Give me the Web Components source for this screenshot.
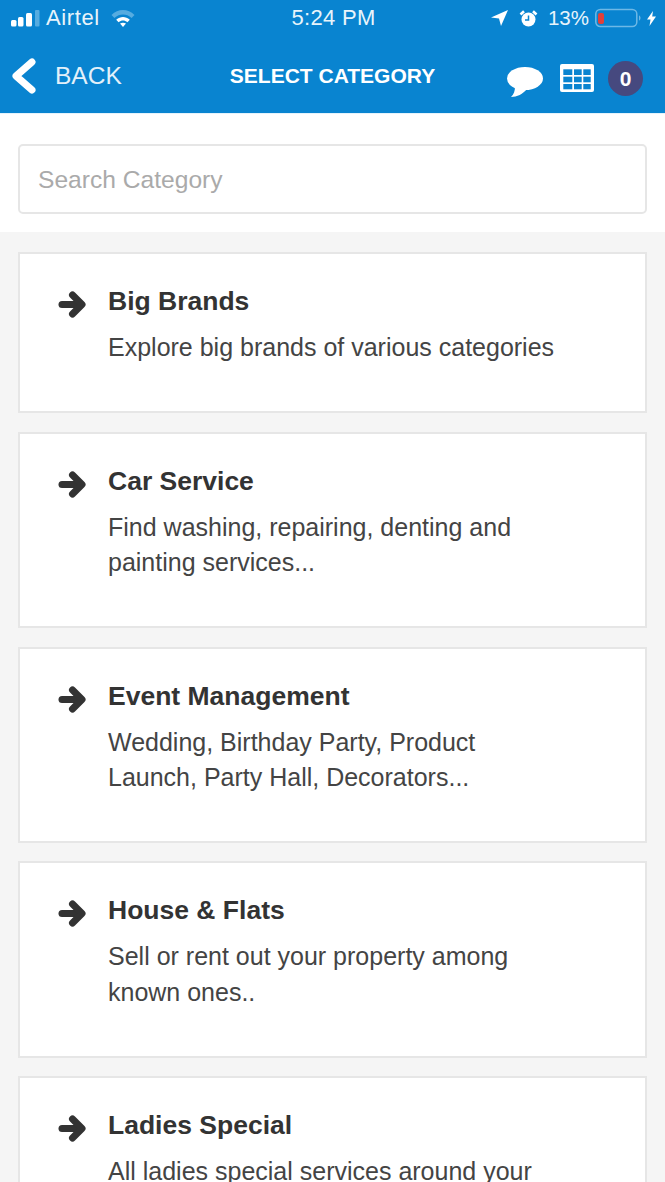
<!DOCTYPE html>
<html>
<head>
<meta charset="utf-8">
<title>Select Category</title>
<style>
html, body { margin: 0; padding: 0; height: 100%; overflow: hidden; background: #f5f5f5; }
body { font-family: "Liberation Sans", Arial, sans-serif; }
</style>
</head>
<body>
<app-header></app-header>
<search-box placeholder="Search Category"></search-box>
<category-list>
	<category-card title="Big Brands">Explore big brands of various categories</category-card>
	<category-card title="Car Service">Find washing, repairing, denting and<br>painting services...</category-card>
	<category-card title="Event Management">Wedding, Birthday Party, Product<br>Launch, Party Hall, Decorators...</category-card>
	<category-card title="House &amp; Flats">Sell or rent out your property among<br>known ones..</category-card>
	<category-card title="Ladies Special">All ladies special services around your</category-card>
</category-list>

<script>
// status bar + nav bar
class AppHeader extends HTMLElement {
	constructor() {
		super();
		const shadowRoot = this.attachShadow({ mode: 'open' });
		shadowRoot.innerHTML = `
		<style>
		:host { display: block; background: #0984d0; color: #fff; height: 113px; }
		.status { display: grid; grid-template-columns: 1fr auto 1fr; align-items: center; height: 38px; box-sizing: border-box; padding: 0 9px 2px 10px; font-size: 21px; color: #e8f4fb; }
		.left, .right { display: flex; align-items: center; }
		.right { justify-content: flex-end; }
		.carrier { margin-left: 6px; font-size: 22px; letter-spacing: .6px; }
		.wifi { margin-left: 11px; }
		.time { font-size: 22px; letter-spacing: .3px; margin-left: 1px; }
		.pct { margin: 0 6px 0 10px; font-size: 20.5px; }
		.nav { display: grid; grid-template-columns: 1fr auto 1fr; align-items: center; height: 75px; padding: 0 12px; box-sizing: border-box; }
		.back { display: flex; align-items: center; font-size: 24.5px; color: #e3f1fa; }
		.back svg { margin-right: 19px; }
		.title { font-size: 21px; font-weight: bold; }
		.actions { display: flex; align-items: flex-start; justify-content: flex-end; align-self: start; padding-right: 10px; }
		.chat { margin-top: 29px; }
		.table { margin: 26px 0 0 17px; }
		.badge { width: 35px; height: 35px; margin: 23px 0 0 14px; border-radius: 50%; background: #46497f; display: flex; align-items: center; justify-content: center; font-size: 21px; font-weight: bold; }
		svg { display: block; }
		</style>
		<div class="status">
			<div class="left">
				<svg width="30" height="17" viewBox="0 0 30 17"><rect x="1" y="10" width="5.5" height="6.5" rx="1.5" fill="#fff"/><rect x="8" y="7" width="5.5" height="9.5" rx="1.5" fill="#fff"/><rect x="16" y="3" width="6" height="13.5" rx="1.5" fill="#fff"/><rect x="25" y="0" width="4.5" height="16.5" rx="1" fill="#56ace0"/></svg>
				<span class="carrier">Airtel</span>
				<svg class="wifi" width="24" height="19" viewBox="0 0 24 19"><path d="M.5 6 C7-.8 17-.8 23.5 6 L20.6 9 C15.5 4.4 8.5 4.4 3.4 9 Z" fill="#56ace0"/><path d="M5.2 10.8 C9.5 7.2 14.5 7.2 18.8 10.8 L16.4 13.2 C13.5 11 10.5 11 7.6 13.2 Z" fill="#fff"/><path d="M9 14.6 C11 13.3 13 13.3 15 14.6 L12 18 Z" fill="#fff"/></svg>
			</div>
			<div class="time">5:24 PM</div>
			<div class="right">
				<svg width="17" height="16" viewBox="0 0 17 16"><path d="M17 0 L0 7.5 L8 8.5 L10 16 Z" fill="#fff"/></svg>
				<svg style="margin-left:11px" width="19" height="17" viewBox="0 0 19 17"><circle cx="9.5" cy="9.5" r="7" fill="#fff"/><path d="M9.5 5.5 V10 H6" fill="none" stroke="#0984d0" stroke-width="1.5"/><path d="M1.5 4.5 L5 1.2 M17.5 4.5 L14 1.2" stroke="#fff" stroke-width="2.6"/></svg>
				<span class="pct">13%</span>
				<svg width="46" height="20" viewBox="0 0 46 20"><rect x=".8" y="1.5" width="41" height="17" rx="4.5" fill="none" stroke="#6db8e6" stroke-width="1.5"/><rect x="3" y="5" width="6" height="11" rx="2" fill="#e2403a"/><path d="M44 7.5 C46 8 46 12 44 12.5 Z" fill="#6db8e6"/></svg>
				<svg style="margin-left:6px" width="9" height="15" viewBox="0 0 9 15"><path d="M6 0 L0 8.5 H3.5 L2.5 15 L9 5.5 H5.2 Z" fill="#fff"/></svg>
			</div>
		</div>
		<div class="nav">
			<div class="back">
				<svg width="24" height="36" viewBox="0 0 24 36"><path d="M20 4 L4 18 L20 32" fill="none" stroke="#fff" stroke-width="7" stroke-linecap="round" stroke-linejoin="round"/></svg>
				<span>BACK</span>
			</div>
			<div class="title">SELECT CATEGORY</div>
			<div class="actions">
				<svg class="chat" width="36" height="30" viewBox="0 0 36 30"><ellipse cx="18" cy="11.5" rx="18" ry="11.5" fill="#fff"/><path d="M8 19 C8 24 7 27 4 30 C10 30 16 27 20 22 Z" fill="#fff"/></svg>
				<svg class="table" width="34" height="28" viewBox="0 0 34 28"><rect width="34" height="28" rx="2" fill="#fff"/><g fill="#0984d0"><rect x="3.3" y="5.3" width="9" height="5.7"/><rect x="14" y="5.3" width="7.7" height="5.7"/><rect x="23.3" y="5.3" width="7.4" height="5.7"/><rect x="3.3" y="12.7" width="9" height="5.6"/><rect x="14" y="12.7" width="7.7" height="5.6"/><rect x="23.3" y="12.7" width="7.4" height="5.6"/><rect x="3.3" y="20" width="9" height="5.3"/><rect x="14" y="20" width="7.7" height="5.3"/><rect x="23.3" y="20" width="7.4" height="5.3"/></g></svg>
				<div class="badge">0</div>
			</div>
		</div>`;
	}
}
customElements.define("app-header", AppHeader);

class SearchBox extends HTMLElement {
	constructor() {
		super();
		const shadowRoot = this.attachShadow({ mode: 'open' });
		shadowRoot.innerHTML = `
		<style>
		:host { display: block; background: #fff; border-top: 1px solid #e4f3fc; padding: 30px 18px 18px 18px; }
		.field { height: 70px; box-sizing: border-box; border: 2px solid #e6e6e6; border-radius: 5px; display: flex; align-items: center; padding: 1px 18px 0 18px; font-size: 24.6px; color: #aaa; }
		</style>
		<div class="field"></div>`;
	}
	connectedCallback() {
		this.shadowRoot.querySelector('.field').textContent = this.getAttribute('placeholder');
	}
}
customElements.define("search-box", SearchBox);

class CategoryList extends HTMLElement {
	constructor() {
		super();
		const shadowRoot = this.attachShadow({ mode: 'open' });
		shadowRoot.innerHTML = `
		<style>
		:host { display: flex; flex-direction: column; gap: 18.7px; background: #f5f5f5; padding: 20px 18px 0 18px; }
		</style>
		<slot></slot>`;
	}
}
customElements.define("category-list", CategoryList);

class CategoryCard extends HTMLElement {
	constructor() {
		super();
		const shadowRoot = this.attachShadow({ mode: 'open' });
		shadowRoot.innerHTML = `
		<style>
		:host { display: flex; flex: none; background: #fff; border: 2px solid #e6e6e6; box-sizing: border-box; padding: 31px 20px 45.8px 38px; color: #333; }
		.arrow { width: 28px; height: 27px; margin: 6px 22px 0 0; flex: none; display: block; }
		h3 { margin: 0 0 13px 0; font-size: 26.5px; line-height: 32px; font-weight: bold; }
		p { margin: 0; font-size: 25px; line-height: 35.2px; color: #444; }
		</style>
		<svg class="arrow" viewBox="0 0 28 27"><path d="M4 13.5 H22" fill="none" stroke="#333" stroke-width="7" stroke-linecap="round"/><path d="M14.5 4 L24 13.5 L14.5 23" fill="none" stroke="#333" stroke-width="7" stroke-linecap="round" stroke-linejoin="round"/></svg>
		<div>
			<h3></h3>
			<p><slot></slot></p>
		</div>`;
	}
	connectedCallback() {
		this.shadowRoot.querySelector('h3').textContent = this.getAttribute('title');
	}
}
customElements.define("category-card", CategoryCard);
</script>
</body>
</html>
